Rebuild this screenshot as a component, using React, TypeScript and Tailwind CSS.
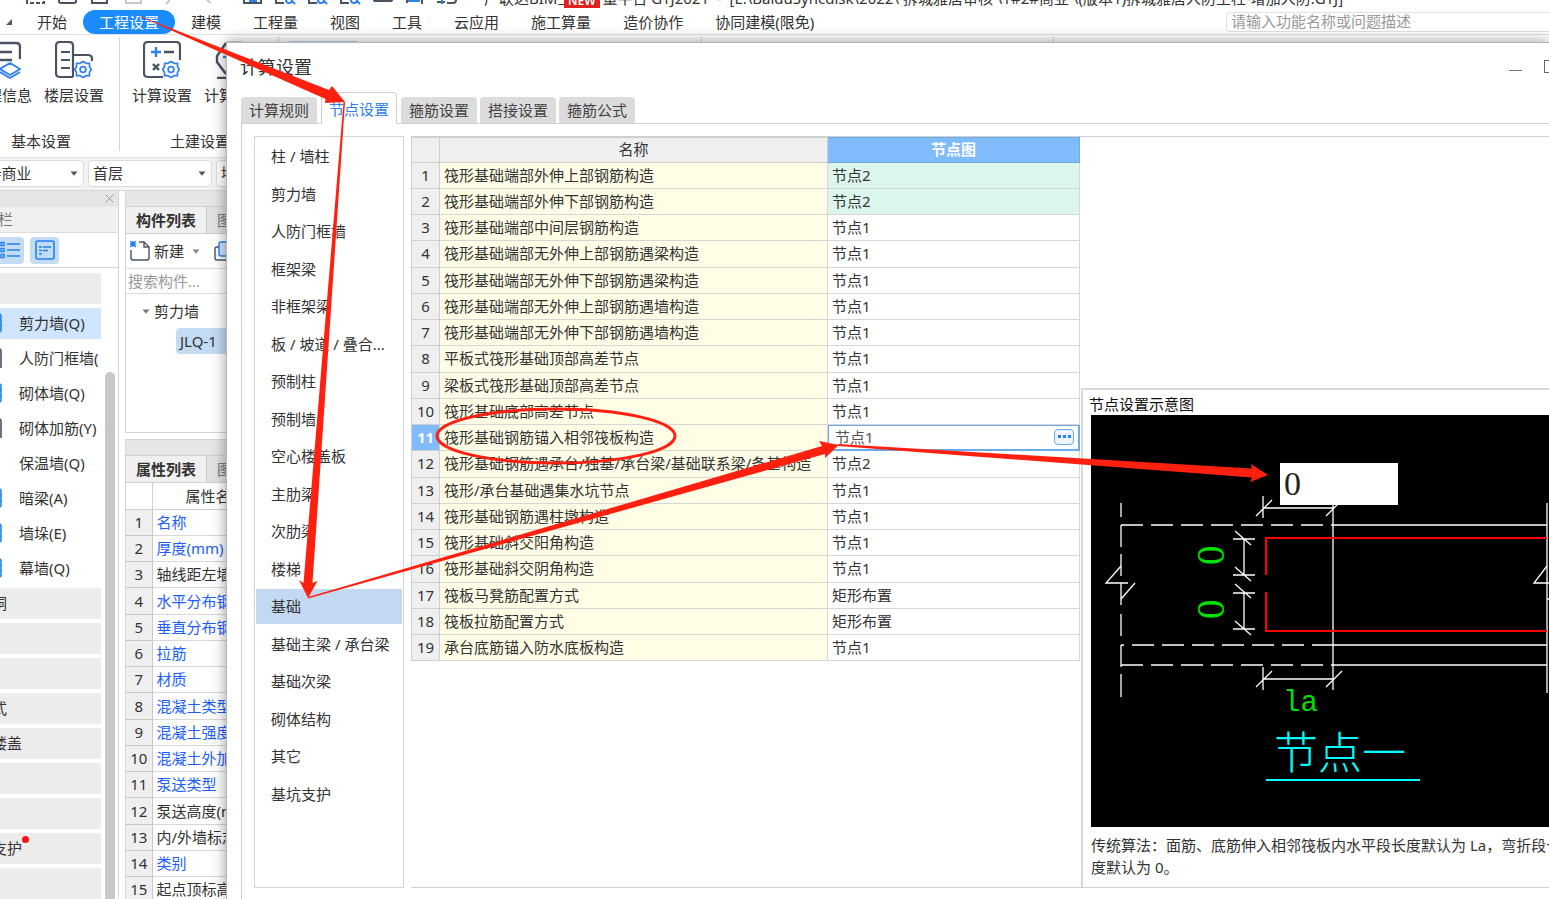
import type { ReactNode } from 'react'

const menus = ['开始', '工程设置', '建模', '工程量', '视图', '工具', '云应用', '施工算量', '造价协作', '协同建模(限免)']

interface NavItem {
  label: string
  kind: 'group' | 'item'
  icon?: 'blue' | 'dark'
  active?: boolean
  dot?: boolean
}

const navItems: NavItem[] = [
  { label: '', kind: 'group' },
  { label: '剪力墙(Q)', kind: 'item', icon: 'blue', active: true },
  { label: '人防门框墙(', kind: 'item', icon: 'dark' },
  { label: '砌体墙(Q)', kind: 'item', icon: 'blue' },
  { label: '砌体加筋(Y)', kind: 'item', icon: 'dark' },
  { label: '保温墙(Q)', kind: 'item' },
  { label: '暗梁(A)', kind: 'item', icon: 'blue' },
  { label: '墙垛(E)', kind: 'item', icon: 'blue' },
  { label: '幕墙(Q)', kind: 'item', icon: 'blue' },
  { label: '门窗洞', kind: 'group' },
  { label: '', kind: 'group' },
  { label: '', kind: 'group' },
  { label: '装配式', kind: 'group' },
  { label: '空心楼盖', kind: 'group' },
  { label: '', kind: 'group' },
  { label: '', kind: 'group' },
  { label: '基坑支护', kind: 'group', dot: true },
  { label: '', kind: 'group' },
]

const properties = [
  { name: '名称', blue: true },
  { name: '厚度(mm)', blue: true },
  { name: '轴线距左墙皮', blue: false },
  { name: '水平分布钢筋', blue: true },
  { name: '垂直分布钢筋', blue: true },
  { name: '拉筋', blue: true },
  { name: '材质', blue: true },
  { name: '混凝土类型', blue: true },
  { name: '混凝土强度', blue: true },
  { name: '混凝土外加剂', blue: true },
  { name: '泵送类型', blue: true },
  { name: '泵送高度(mm)', blue: false },
  { name: '内/外墙标志', blue: false },
  { name: '类别', blue: true },
  { name: '起点顶标高', blue: false },
]

const tabs = ['计算规则', '节点设置', '箍筋设置', '搭接设置', '箍筋公式']

const categories = [
  '柱 / 墙柱',
  '剪力墙',
  '人防门框墙',
  '框架梁',
  '非框架梁',
  '板 / 坡道 / 叠合...',
  '预制柱',
  '预制墙',
  '空心楼盖板',
  '主肋梁',
  '次肋梁',
  '楼梯',
  '基础',
  '基础主梁 / 承台梁',
  '基础次梁',
  '砌体结构',
  '其它',
  '基坑支护',
]

const nodes = [
  ['筏形基础端部外伸上部钢筋构造', '节点2'],
  ['筏形基础端部外伸下部钢筋构造', '节点2'],
  ['筏形基础端部中间层钢筋构造', '节点1'],
  ['筏形基础端部无外伸上部钢筋遇梁构造', '节点1'],
  ['筏形基础端部无外伸下部钢筋遇梁构造', '节点1'],
  ['筏形基础端部无外伸上部钢筋遇墙构造', '节点1'],
  ['筏形基础端部无外伸下部钢筋遇墙构造', '节点1'],
  ['平板式筏形基础顶部高差节点', '节点1'],
  ['梁板式筏形基础顶部高差节点', '节点1'],
  ['筏形基础底部高差节点', '节点1'],
  ['筏形基础钢筋锚入相邻筏板构造', '节点1'],
  ['筏形基础钢筋遇承台/独基/承台梁/基础联系梁/条基构造', '节点2'],
  ['筏形/承台基础遇集水坑节点', '节点1'],
  ['筏形基础钢筋遇柱墩构造', '节点1'],
  ['筏形基础斜交阳角构造', '节点1'],
  ['筏形基础斜交阴角构造', '节点1'],
  ['筏板马凳筋配置方式', '矩形布置'],
  ['筏板拉筋配置方式', '矩形布置'],
  ['承台底筋锚入防水底板构造', '节点1'],
]

const SELECTED_ROW = 10

const Caret = ({ className }: { className?: string }) => (
  <svg viewBox="0 0 8 5" className={`h-[5px] w-2 ${className ?? ''}`}>
    <path d="M0.5 0.5h7L4 4.8z" fill="currentColor" />
  </svg>
)

const Gear = () => (
  <g fill="none" stroke="#2f80ed" strokeWidth="1.7" strokeLinejoin="round">
    <path d="M28 20.500l3 1.800 3.500 0v3.500l1.800 2.700-1.800 2.700v3.500h-3.500l-3 1.800-3-1.800h-3.500v-3.500l-1.800-2.700 1.800-2.700v-3.500h3.500z" />
    <circle cx="28" cy="28.500" r="2.9" />
  </g>
)

const RibbonButton = ({ label, children }: { label: string; children: ReactNode }) => (
  <button className="flex w-[60px] shrink-0 flex-col items-center gap-1.5 whitespace-nowrap">
    <svg viewBox="0 0 38 38" className="h-[38px] w-[38px]">
      {children}
    </svg>
    <span className="leading-5">{label}</span>
  </button>
)

const TitleBar = () => (
  <div className="flex h-2.5 items-end pl-12">
    <svg viewBox="0 0 484 10" className="h-2.5 w-[484px] shrink-0" fill="none" strokeWidth="2">
      <path d="M27 0v3h17V0" stroke="#4a5163" strokeDasharray="4 2" />
      <path d="M59 0v1q0 2 2 2h13q2 0 2-2V0M92 0v3h15V0M374 0q0 1 2 1h14q2 0 2-1" stroke="#4a5163" />
      <path d="M126 0v3h15V0M170 0l-4 4M207 0l4 3" stroke="#c4c7cd" />
      <path d="M244 0v3h17V0M276 0v3h8M309 0v3h8M341 0v3h8M407 0v3M422 0v4M437 2h8" stroke="#4a5163" />
      <path d="M286 0a3 3 0 0 0 6 0M292 1l3 3M318 0a3 3 0 0 0 6 0M324 1l3 3M351 0a3 3 0 0 0 6 0M357 1l3 3M408 1h12M442 0v4M249 1h8" stroke="#2f80ed" />
      <path d="M447 3h6q3 0 3-3" stroke="#4a5163" />
    </svg>
    <div className="relative mb-0.5 flex shrink-0 whitespace-pre leading-5">
      <span>广联达BIM土建计量平台 GTJ2021  -  [E:\BaiduSyncdisk\2022\ 拆城雅居审核 \1#2#商业 \(版本1)拆城雅居人防主柱-增加人防.GTJ]</span>
      <span className="absolute bottom-0 left-20 bg-[#e02020] px-1 text-xs font-semibold leading-3.5 text-white">NEW</span>
    </div>
  </div>
)

const MenuBar = () => (
  <nav className="flex h-6 items-center pl-12">
    <svg viewBox="0 0 6 6" className="ml-1.5 h-1.5 w-1.5">
      <path d="M6 0v6H0z" fill="#555" />
    </svg>
    <div className="ml-[9px] flex shrink-0">
      {menus.map((menu) => (
        <button
          key={menu}
          className={`h-6 whitespace-nowrap px-4 leading-6 ${menu === '工程设置' ? 'rounded-full bg-[#1a8cff] text-white' : ''}`}
        >
          {menu}
        </button>
      ))}
    </div>
    <input
      aria-label="搜索功能"
      placeholder="请输入功能名称或问题描述"
      className="ml-auto h-5 w-[323px] rounded-l border border-r-0 border-[#e2e2e2] px-1 pb-0.5 placeholder:text-[#999]"
    />
  </nav>
)

const Ribbon = () => (
  <div className="flex h-[124px] border-y border-[#e2e2e2] pb-1.5 pt-0.5">
    <section className="flex w-[168px] shrink-0 flex-col justify-between border-r border-[#d5d5d5] pt-1">
      <div className="flex justify-end gap-3 pr-[15px]">
        <RibbonButton label="工程信息">
          <path d="M6 36q-4 0-4-4V6q0-4 4-4h26q4 0 4 4v12M8 11h20M8 19h20" transform="translate(1 0)" fill="none" stroke="#4a5163" strokeWidth="2.4" />
          <path d="M17 28l10-6 10 6-10 6zM17 31l10 6 10-6" fill="none" stroke="#2f80ed" strokeWidth="2" strokeLinejoin="round" />
        </RibbonButton>
        <RibbonButton label="楼层设置">
          <path d="M18 36H5q-4 0-4-4V5q0-4 4-4h9q4 0 4 4v31M18 14h15q4 0 4 4v2M6 11h9M6 19h9M6 27h9" fill="none" stroke="#4a5163" strokeWidth="2.2" />
          <Gear />
        </RibbonButton>
      </div>
      <h2 className="pr-12 text-right leading-5">基本设置</h2>
    </section>
    <section className="flex w-[159px] shrink-0 flex-col justify-between border-r border-[#d5d5d5] pt-1">
      <div className="flex gap-3 pl-3">
        <RibbonButton label="计算设置">
          <path d="M20 36H5q-4 0-4-4V5q0-4 4-4h28q4 0 4 4v14" fill="none" stroke="#4a5163" strokeWidth="2.2" />
          <path d="M8 11h10M13 6v10" stroke="#2f80ed" strokeWidth="2.4" />
          <path d="M21 11h10M10 23l6 6M16 23l-6 6" stroke="#4a5163" strokeWidth="2.4" />
          <Gear />
        </RibbonButton>
        <RibbonButton label="计算规则">
          <path d="M11 2L2 15v6l9 12M11 2h16M2 37h34" fill="none" stroke="#4a5163" strokeWidth="2.4" />
          <path d="M8 16h14" stroke="#2f80ed" strokeWidth="2.4" />
        </RibbonButton>
      </div>
      <h2 className="pl-[50px] leading-5">土建设置</h2>
    </section>
    <section className="w-[423px] shrink-0 border-r border-[#d5d5d5] pl-2.5 pt-1">
      <div className="h-20 w-[68px] bg-[#c2dcf5]" />
    </section>
    <section className="w-[352px] shrink-0 border-r border-[#d5d5d5]" />
  </div>
)

const Selector = ({ label, value, className }: { label: string; value: string; className: string }) => (
  <div className={`relative shrink-0 ${className}`}>
    <select aria-label={label} className="h-[27px] w-full appearance-none rounded border border-[#dcdcdc] bg-white pb-0.5 pl-1 leading-5">
      <option>{value}</option>
    </select>
    <Caret className="absolute right-1.5 top-[11px] text-[#555]" />
  </div>
)

const NavPanel = () => (
  <aside className="flex w-[167px] shrink-0 flex-col border-r border-[#d5d5d5]">
    <div className="flex h-3.5 shrink-0 items-center justify-end bg-[#e6e6e6] pr-1">
      <button aria-label="关闭">
        <svg viewBox="0 0 9 9" className="h-[9px] w-[9px]">
          <path d="M0.5 0.5l8 8M8.5 0.5l-8 8" stroke="#999" />
        </svg>
      </button>
    </div>
    <h2 className="h-7 shrink-0 border-y border-[#dcdcdc] bg-[#f0f0f0] pl-4 leading-[26px] text-[#777]">导航栏</h2>
    <div className="flex h-[35px] shrink-0 items-center gap-1.5 border-b border-[#d5d5d5] pl-[43px]">
      <button aria-label="列表" className="flex h-[27px] w-[29px] items-center justify-center rounded bg-[#c4dbf4]">
        <svg viewBox="0 0 20 18" className="h-[18px] w-5" fill="none" stroke="#2280f0" strokeWidth="1.4">
          <path d="M7 3h13M7 9h13M7 15h13M1 1.5h3v3H1zM1 7.500h3v3H1zM1 13.500h3v3H1z" />
        </svg>
      </button>
      <button aria-label="图标" className="flex h-[27px] w-[29px] items-center justify-center rounded bg-[#c4dbf4]">
        <svg viewBox="0 0 20 20" className="h-5 w-5" fill="none" stroke="#2280f0" strokeWidth="1.6">
          <rect x="1" y="1" width="18" height="18" rx="2" />
          <path d="M4 7h3M8 7h8M4 10.500h3M8 10.500h5M4 14h3" />
        </svg>
      </button>
    </div>
    <div className="flex min-h-0 flex-1 justify-between overflow-hidden pr-[3px]">
      <ul className="flex w-[149px] flex-col gap-1 pt-[5px]">
        {navItems.map((item, i) => (
          <li
            key={i}
            className={`flex h-[31px] shrink-0 items-center whitespace-nowrap pb-0.5 ${
              item.kind === 'group' ? 'bg-[#ececec] pl-2.5' : item.active ? 'bg-[#d0e5ff]' : ''
            }`}
          >
            {item.kind === 'item' && (
              <svg viewBox="0 0 18 20" className="ml-8 mr-[17px] h-5 w-[18px] shrink-0" fill="none" strokeWidth="1.6">
                {item.icon === 'blue' && <path d="M1 1h14q2 0 2 2v14q0 2-2 2H1M1 7h16M1 13h16" stroke="#2280f0" />}
                {item.icon === 'dark' && <path d="M1 1h14q2 0 2 2v16H1" stroke="#4a5163" />}
              </svg>
            )}
            <span>{item.label}</span>
            {item.dot && <i className="mb-4 h-[7px] w-[7px] rounded-full bg-[#ff1010]" />}
          </li>
        ))}
      </ul>
      <div className="mt-[104px] w-2.5 rounded-t-full bg-[#c8c8c8]" />
    </div>
  </aside>
)

const PanelTabs = ({ first, second }: { first: string; second: string }) => (
  <>
    <div className="h-[15px] shrink-0 bg-[#e6e6e6]" />
    <div className="flex h-7 shrink-0 border-y border-[#d0d0d0] bg-[#e2e2e2] leading-[26px]">
      <button className="w-[81px] border-r border-[#c8ccd2] bg-[#f0f0f0] font-bold">{first}</button>
      <button className="pl-2.5 text-[#777]">{second}</button>
    </div>
  </>
)

const ComponentPanel = () => (
  <section className="flex h-[242px] shrink-0 flex-col border border-t-0 border-[#d5d5d5]">
    <PanelTabs first="构件列表" second="图纸管理" />
    <div className="flex h-[35px] shrink-0 items-center border-b border-[#dcdcdc] pl-1">
      <button className="flex items-center gap-1">
        <svg viewBox="0 0 20 20" className="h-5 w-5" fill="none" strokeWidth="1.4">
          <path d="M1 9v8q0 2 2 2h14q2 0 2-2V6l-5-5H9M14 1v5h5" stroke="#4a5163" />
          <path d="M0 0l6 6M6 0L0 6M3 0v6M0 3h6" stroke="#2280f0" />
        </svg>
        <span>新建</span>
      </button>
      <Caret className="ml-2 text-[#888]" />
      <svg viewBox="0 0 20 20" className="ml-3.5 h-5 w-5" fill="none" strokeWidth="1.4">
        <path d="M5 6H3Q1 6 1 8v9q0 2 2 2h11" stroke="#4a5163" />
        <rect x="5" y="1" width="14" height="14" rx="2" stroke="#2280f0" fill="#d0e5ff" />
      </svg>
    </div>
    <input
      aria-label="搜索构件"
      placeholder="搜索构件..."
      className="h-[25px] shrink-0 border-b border-[#dcdcdc] px-0.5 placeholder:text-[#999]"
    />
    <div className="pl-4 pt-[7px]">
      <p className="flex items-center gap-1 leading-5">
        <Caret className="text-[#777]" />
        剪力墙
      </p>
      <p className="ml-[34px] mt-[7px] rounded bg-[#c4dbf4] pl-1 leading-[26px]">JLQ-1</p>
    </div>
  </section>
)

const PropertyPanel = () => (
  <section className="flex flex-1 flex-col border border-b-0 border-[#d5d5d5]">
    <PanelTabs first="属性列表" second="图层管理" />
    <table className="w-full table-fixed border-collapse leading-5">
      <thead>
        <tr className="h-[26px]">
          <th className="w-[26px] border-b border-r border-[#d0d0d0]" />
          <th className="border-b border-[#d0d0d0] pl-[33px] text-left font-normal">属性名称</th>
        </tr>
      </thead>
      <tbody>
        {properties.map((prop, i) => (
          <tr key={prop.name} className="h-[26px] nth-[4n]:h-[27px]">
            <td className="border-b border-r border-[#c8c8c8] bg-[#efefef] text-center">{i + 1}</td>
            <td className={`whitespace-nowrap border-b border-[#d8d8d8] pl-1 ${prop.blue ? 'text-[#1c5dff]' : ''}`}>{prop.name}</td>
          </tr>
        ))}
      </tbody>
    </table>
  </section>
)

const CategoryList = () => (
  <ul className="w-[150px] shrink-0 border border-[#d3d5d8] px-px pt-0.5">
    {categories.map((name) => (
      <li key={name} className="h-[37px] pb-[3px] odd:h-[38px]">
        <button className={`h-full w-full whitespace-nowrap pb-px pl-[15px] text-left ${name === '基础' ? 'bg-[#c2d9f1]' : ''}`}>{name}</button>
      </li>
    ))}
  </ul>
)

const NodeTable = () => (
  <table className="w-[669px] shrink-0 table-fixed self-start border-collapse border border-[#cfcfcf] leading-5">
    <thead>
      <tr className="h-[25px] bg-[#efefef]">
        <th className="w-7 border border-[#cfcfcf]" />
        <th className="border border-[#cfcfcf] pb-0.5 font-normal">名称</th>
        <th className="w-[252px] border border-[#6fabea] bg-[#80bbfb] pb-0.5 font-bold text-white">节点图</th>
      </tr>
    </thead>
    <tbody>
      {nodes.map(([name, node], i) => {
        const selected = i === SELECTED_ROW
        return (
          <tr key={name} className="h-[26px] nth-[4n]:h-[27px]">
            <td className={`border border-[#cfcfcf] pb-0.5 text-center ${selected ? 'bg-[#80bbfb] font-bold text-white' : 'bg-[#efefef]'}`}>{i + 1}</td>
            <td className="whitespace-nowrap border border-[#d6d6d6] bg-[#fffde6] pb-0.5 pl-1">{name}</td>
            {selected ? (
              <td className="border border-[#6aa9ea] p-0">
                <div className="flex h-[25px] items-center border border-[#6aa9ea] pb-0.5 pl-1.5 pr-1">
                  <input aria-label={name} defaultValue={node} className="h-5 min-w-0 flex-1 text-[#555]" />
                  <button aria-label="选择节点图" className="flex h-4 w-5 items-center justify-center gap-0.5 rounded-sm border border-[#6aa9ea] bg-[#eef5fd]">
                    <i className="h-[3px] w-[3px] bg-[#2280f0]" />
                    <i className="h-[3px] w-[3px] bg-[#2280f0]" />
                    <i className="h-[3px] w-[3px] bg-[#2280f0]" />
                  </button>
                </div>
              </td>
            ) : (
              <td className={`border border-[#d6d6d6] pb-0.5 pl-1 ${i < 2 ? 'bg-[#ddf6ec]' : ''}`}>{node}</td>
            )}
          </tr>
        )
      })}
    </tbody>
  </table>
)

const NodeDrawing = () => (
  <svg viewBox="0 0 480 412" className="h-[412px] w-[480px]" fill="none" stroke="#fff" strokeWidth="1.3">
    {/* slab outline, dashed on the neighbouring side */}
    <path d="M30 110h212M30 250h212" strokeDasharray="22 8" />
    <path d="M30 230h212" strokeDasharray="22 8" strokeDashoffset="19" />
    <path d="M242 110h214M242 230h214M242 250h214M242 79v173" />
    <path d="M30 88v14M30 110v22M30 139v22M30 168v22M30 199v22M30 230v22M30 259v23M456 88v190" />
    <path d="M30 151L15 168h22M30 184L44 168" />
    <path d="M456 151L443 168h22M456 184h10" />
    {/* dimension lines */}
    <path d="M172 93h71M172 81v22M165 101l16-16M235 101l16-16" />
    <path d="M172 264h71M172 252v23M242 252v23M165 272l16-16M235 272l16-16" />
    <path d="M142 124h22M142 160h22M153 124v36M144 116l16 14M144 152l16 14" />
    <path d="M142 178h22M142 214h22M153 178v36M144 169l16 14M144 206l16 14" />
    {/* rebars */}
    <path d="M456 123H175v37M175 177v39h281" stroke="#f00" strokeWidth="2" />
    <path d="M175 365h154" stroke="#0ff" strokeWidth="2" />
    <g stroke="none" fill="#00e000">
      <text transform="translate(133 150) rotate(-90)" fontSize="39" fontFamily="Liberation Serif, serif">0</text>
      <text transform="translate(133 204) rotate(-90)" fontSize="39" fontFamily="Liberation Serif, serif">0</text>
      <text x="192" y="296" fontSize="29" fontFamily="Liberation Mono, monospace">la</text>
    </g>
    <text x="183" y="354" fontSize="44" fontWeight="300" fontFamily="Noto Sans CJK SC, sans-serif" stroke="none" fill="#0ff">节点一</text>
  </svg>
)

const DiagramPanel = () => (
  <section className="border-l-2 border-t-2 border-[#d8d8d8] pl-2">
    <h3 className="-ml-0.5 pt-1 leading-[21px] text-[#111]">节点设置示意图</h3>
    <div className="relative overflow-hidden bg-black">
      <NodeDrawing />
      <input
        aria-label="弯折长度"
        defaultValue="0"
        className="absolute left-[189px] top-12 h-[42px] w-[118px] bg-white px-1 font-['Liberation_Serif',serif] text-[34px] text-[#222]"
      />
    </div>
    <p className="whitespace-nowrap pb-[9px] pt-[7px] leading-[22px]">
      传统算法：面筋、底筋伸入相邻筏板内水平段长度默认为 La，弯折段长
      <br />
      度默认为 0。
    </p>
  </section>
)

const SettingsDialog = () => (
  <div
    role="dialog"
    aria-label="计算设置"
    className="absolute bottom-0 left-[226px] right-0 top-[42px] flex flex-col overflow-hidden border-l border-t border-[#b4b4b4] bg-white shadow-[0_0_14px_rgba(0,0,0,0.4)]"
  >
    <header className="flex h-[49px] shrink-0 items-center pb-0.5 pl-[13px]">
      <h1 className="text-lg">计算设置</h1>
      <div className="-mr-2 ml-auto flex items-center gap-[22px]">
        <button aria-label="最小化">
          <svg viewBox="0 0 13 13" className="h-[13px] w-[13px]">
            <path d="M0 10.500h13" stroke="#777" />
          </svg>
        </button>
        <button aria-label="最大化">
          <svg viewBox="0 0 13 13" className="h-[13px] w-[13px]">
            <rect x="0.5" y="0.5" width="12" height="12" fill="none" stroke="#666" />
          </svg>
        </button>
      </div>
    </header>
    <div role="tablist" className="flex h-[31px] shrink-0 items-end gap-[3px] pl-3.5">
      {tabs.map((tab) => (
        <button
          key={tab}
          role="tab"
          aria-selected={tab === '节点设置'}
          className={`w-[76px] rounded-t ${
            tab === '节点设置'
              ? 'relative mx-px -mb-px h-8 border border-b-0 border-[#ccd0d6] bg-white text-[#2f80e8]'
              : 'h-[26px] bg-[#dcdcdc] text-[#444]'
          }`}
        >
          {tab}
        </button>
      ))}
    </div>
    <div className="ml-3.5 flex min-h-0 flex-1 gap-[7px] border-l border-t border-[#ccd0d6] pb-[11px] pl-3 pt-3">
      <CategoryList />
      <div className="flex min-w-0 flex-1 gap-px border-y border-[#cfcfcf]">
        <NodeTable />
        <div className="flex min-w-0 flex-1 flex-col justify-end overflow-hidden">
          <DiagramPanel />
        </div>
      </div>
    </div>
  </div>
)

// red marker strokes drawn over the whole window
const Annotations = () => (
  <svg className="pointer-events-none absolute left-0 top-0 z-20 h-full w-full" fill="#ff2010">
    <path d="M132 13L329 90L332 86L345 102L325 103L325.500 99Z" />
    <path d="M343.500 102L345 102L312.500 583L317.500 581L308 598L299 580L303.500 583Z" />
    <path d="M308 597L822 446L819 441L839 445L825 458L825 454L308 598.500Z" />
    <path d="M838 444L1252 468.500L1251 464L1268 475L1250 482L1252 477.500L838 446Z" />
    <ellipse cx="556" cy="436" rx="119" ry="27" fill="none" stroke="#ff2010" strokeWidth="3" />
  </svg>
)

export default function App() {
  return (
    <div className="relative h-screen overflow-hidden bg-white font-['Noto_Sans','Noto_Sans_CJK_SC',sans-serif] text-[15px] leading-5 text-[#333]">
      <div className="-ml-12 flex h-full flex-col">
        <TitleBar />
        <MenuBar />
        <Ribbon />
        <div className="flex h-[33px] shrink-0 gap-1 border-b border-[#d8d8d8] bg-[#f3f3f3] pl-2 pt-0.5">
          <Selector label="工程" value="1#2#商业" className="w-[124px]" />
          <Selector label="楼层" value="首层" className="w-[124px]" />
          <Selector label="构件类型" value="墙" className="w-[124px]" />
        </div>
        <div className="flex min-h-0 flex-1 gap-1.5">
          <NavPanel />
          <div className="flex w-[280px] flex-col gap-1.5 overflow-hidden">
            <ComponentPanel />
            <PropertyPanel />
          </div>
        </div>
      </div>
      <SettingsDialog />
      <Annotations />
    </div>
  )
}
